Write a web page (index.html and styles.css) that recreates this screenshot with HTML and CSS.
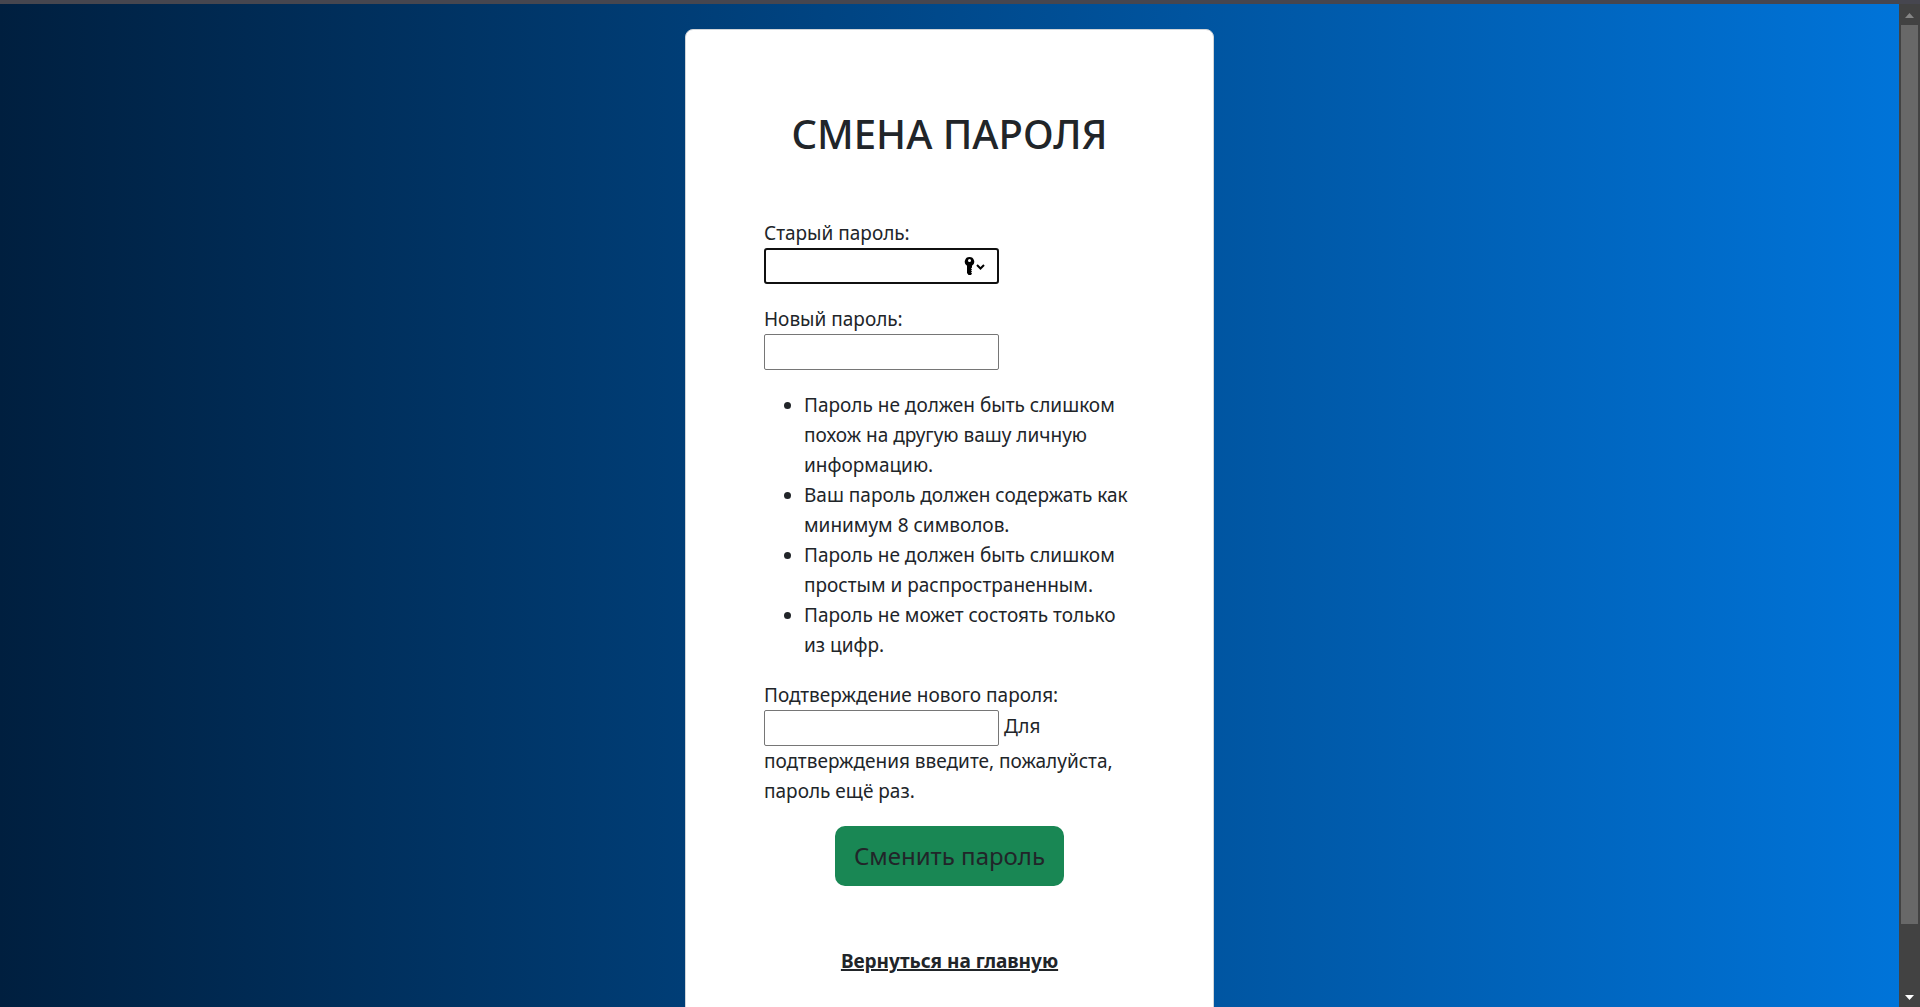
FILE: index.html
```html
<!DOCTYPE html>
<html lang="ru">
<head>
<meta charset="utf-8">
<meta name="viewport" content="width=device-width, initial-scale=1">
<title>Смена пароля</title>
<link rel="stylesheet" href="styles.css">
</head>
<body>
<div class="topline"></div>
<div class="viewport">
  <main class="page">
    <section class="card">
      <h1 class="title">СМЕНА ПАРОЛЯ</h1>
      <form class="form">
        <div class="field">
          <label for="old">Старый пароль:</label>
          <span class="key-field">
            <input class="input input-active" id="old" type="password">
            <svg class="key-icon" viewBox="0 0 22 20" width="22" height="20" aria-hidden="true">
              <path fill="#000" fill-rule="evenodd" d="M5.500 1a4.700 4.700 0 0 0-2.500 8.700V17l1.500 2h2.500l1-1.500-1-1 1-1-1-1 1-1-1-1 1-1V9.700A4.700 4.700 0 0 0 5.500 1zM5.500 3a1.500 1.500 0 1 1 0 3 1.500 1.500 0 0 1 0-3z"/>
              <path fill="none" stroke="#000" stroke-width="2" d="M13 9l3.500 3.500L20 9"/>
            </svg>
          </span>
        </div>
        <div class="field">
          <label for="new">Новый пароль:</label>
          <input class="input" id="new" type="password">
        </div>
        <ul class="rules">
          <li>Пароль не должен быть слишком похож на другую вашу личную информацию.</li>
          <li>Ваш пароль должен содержать как минимум 8 символов.</li>
          <li>Пароль не должен быть слишком простым и распространенным.</li>
          <li>Пароль не может состоять только из цифр.</li>
        </ul>
        <div class="field">
          <label for="confirm">Подтверждение нового пароля:</label>
          <input class="input" id="confirm" type="password">
          <span>Для подтверждения введите, пожалуйста, пароль ещё раз.</span>
        </div>
        <button class="submit" type="submit">Сменить пароль</button>
      </form>
      <a class="back" href="#">Вернуться на главную</a>
    </section>
  </main>
  <div class="scrollbar" aria-hidden="true">
    <svg class="arrow" viewBox="0 0 9 5" width="9" height="5"><path fill="#868686" d="M0 5L4.500 0 9 5z"/></svg>
    <div class="track"><div class="thumb"></div></div>
    <svg class="arrow" viewBox="0 0 9 5" width="9" height="5"><path fill="#fff" d="M0 0h9L4.500 5z"/></svg>
  </div>
</div>
</body>
</html>
```
FILE: styles.css
```css
* { box-sizing: border-box; }

body {
  margin: 0;
  height: 100vh;
  display: flex;
  flex-direction: column;
  overflow: hidden;
  color: #212529;
  font-family: "Segoe UI", "Noto Sans", "Open Sans", sans-serif;
  font-size: 19px;
  line-height: 30px;
}

.topline {
  flex: none;
  height: 4px;
  background: #46464f;
}

.viewport {
  flex: 1;
  min-height: 0;
  display: flex;
}

.page {
  flex: 1;
  overflow: hidden;
  padding: 25px 20px;
  background: linear-gradient(to right, #001f3f, #0074d9);
}

.card {
  display: flex;
  flex-direction: column;
  max-width: 529px;
  margin: 0 auto;
  padding: 80px 78px;
  background: #fff;
  border: 1px solid #d0d4d8;
  border-radius: 8px;
}

.title {
  margin: 0 0 60px;
  font-size: 40px;
  font-weight: 500;
  line-height: 48px;
  text-align: center;
}

.form {
  display: flex;
  flex-direction: column;
  gap: 20px;
}

.field label { display: block; }

.input {
  width: 235px;
  height: 36px;
  padding: 1px 2px;
  border: 1px solid #767676;
  border-radius: 2px;
  background: #fff;
  font: inherit;
  vertical-align: middle;
}

.input-active {
  border: 2px solid #101010;
  border-radius: 3px;
  outline: none;
}

.key-field {
  display: block;
  position: relative;
  width: 235px;
  height: 36px;
  line-height: 0;
}

.key-icon {
  position: absolute;
  top: 8px;
  right: 13px;
}

.rules {
  margin: 0;
  padding-left: 40px;
}

.submit {
  align-self: center;
  height: 60px;
  padding: 0 19px;
  border: 0;
  border-radius: 10px;
  background: #198754;
  color: #212529;
  font: inherit;
  font-size: 24px;
}

.back {
  align-self: center;
  margin-top: 60px;
  color: #212529;
  font-weight: 700;
  text-decoration-thickness: 2px;
}

.scrollbar {
  flex: none;
  width: 21px;
  display: flex;
  flex-direction: column;
  align-items: center;
  gap: 7px;
  padding: 9px 0 7px;
  background: #424242;
}

.arrow { flex: none; }

.track {
  flex: 1;
  width: 17px;
}

.thumb {
  height: 93.4%;
  background: #686868;
}
```
